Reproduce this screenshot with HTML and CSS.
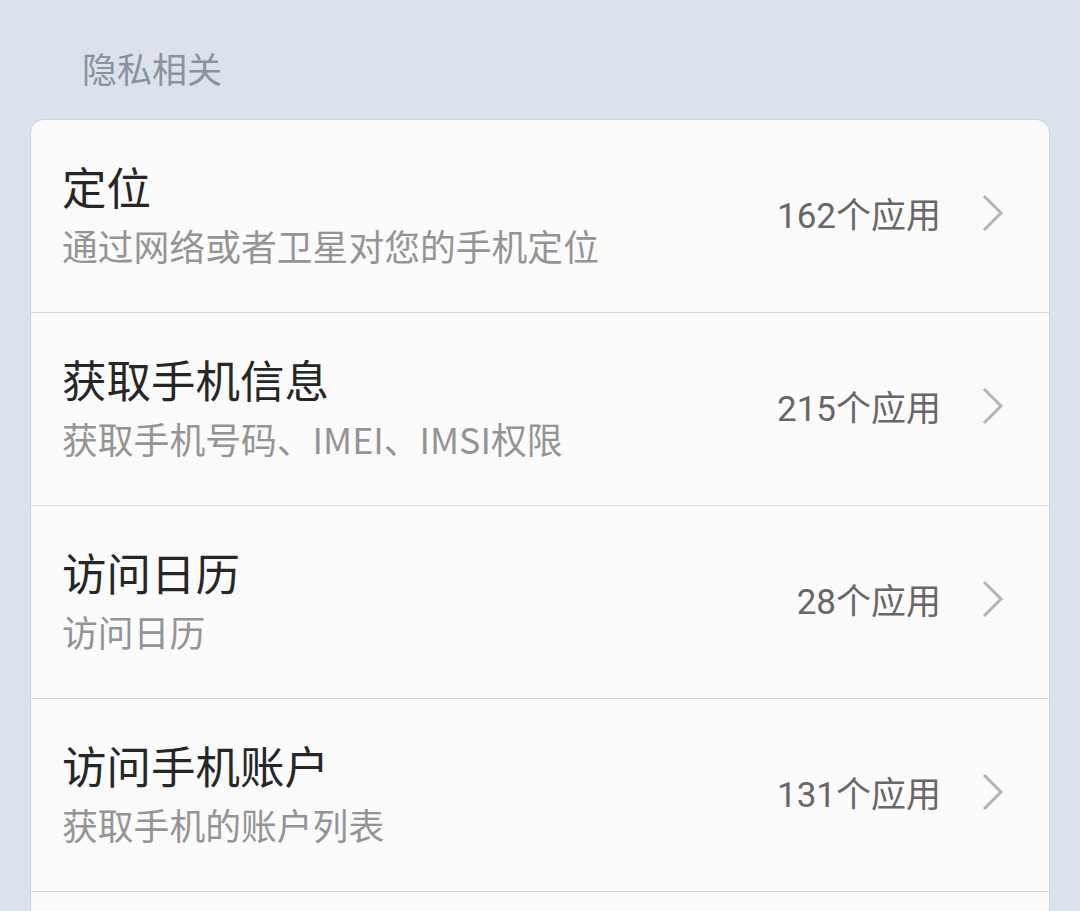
FILE: index.html
```html
<!DOCTYPE html>
<html lang="zh-CN">
<head>
    <meta charset="UTF-8">
    <meta name="viewport" content="width=device-width, initial-scale=1.0">
    <title>隐私相关</title>
    <link rel="stylesheet" href="styles.css">
</head>
<body>
    <div class="section-title">隐私相关</div>
    <div class="card">
        <div class="row">
            <div class="info">
                <div class="title">定位</div>
                <div class="desc">通过网络或者卫星对您的手机定位</div>
            </div>
            <div class="count">162个应用</div>
            <svg class="arrow" width="22" height="38" viewBox="0 0 22 38"><polyline points="2,2 19,19 2,36" fill="none" stroke="#b4b4b4" stroke-width="3"/></svg>
        </div>
        <div class="row">
            <div class="info">
                <div class="title">获取手机信息</div>
                <div class="desc">获取手机号码、IMEI、IMSI权限</div>
            </div>
            <div class="count">215个应用</div>
            <svg class="arrow" width="22" height="38" viewBox="0 0 22 38"><polyline points="2,2 19,19 2,36" fill="none" stroke="#b4b4b4" stroke-width="3"/></svg>
        </div>
        <div class="row">
            <div class="info">
                <div class="title">访问日历</div>
                <div class="desc">访问日历</div>
            </div>
            <div class="count">28个应用</div>
            <svg class="arrow" width="22" height="38" viewBox="0 0 22 38"><polyline points="2,2 19,19 2,36" fill="none" stroke="#b4b4b4" stroke-width="3"/></svg>
        </div>
        <div class="row">
            <div class="info">
                <div class="title">访问手机账户</div>
                <div class="desc">获取手机的账户列表</div>
            </div>
            <div class="count">131个应用</div>
            <svg class="arrow" width="22" height="38" viewBox="0 0 22 38"><polyline points="2,2 19,19 2,36" fill="none" stroke="#b4b4b4" stroke-width="3"/></svg>
        </div>
        <div class="row"></div>
    </div>
</body>
</html>
```

FILE: styles.css
```css
html, body {
    margin: 0;
    height: 100%;
    overflow: hidden;
}

body {
    background-color: #dbe2ec;
    font-family: Roboto, "Noto Sans CJK SC", sans-serif;
}

.section-title {
    padding: 44px 0 0 82px;
    font-size: 35px;
    line-height: 48px;
    color: #8b929b;
    margin-bottom: 27px;
    font-family: "Noto Sans CJK SC", sans-serif;
}

.card {
    margin: 0 30px;
    background-color: #fbfbfb;
    border: 1px solid #cdd3dc;
    border-bottom: none;
    border-radius: 14px 14px 0 0;
    overflow: hidden;
}

.row {
    box-sizing: border-box;
    display: flex;
    align-items: center;
    height: 193px;
    padding: 0 45px 7px 31px;
    border-bottom: 1px solid #d9d9d9;
}

.info {
    flex: 1;
    padding-top: 6px;
}

.title {
    font-size: 44.5px;
    line-height: 56px;
    color: #262626;
}

.desc {
    margin-top: 3px;
    font-size: 35.8px;
    line-height: 48px;
    color: #949494;
    font-family: "Noto Sans CJK SC", sans-serif;
}

.count {
    font-size: 35px;
    color: #676767;
    margin-right: 41px;
}

.arrow {
    display: block;
}
```
